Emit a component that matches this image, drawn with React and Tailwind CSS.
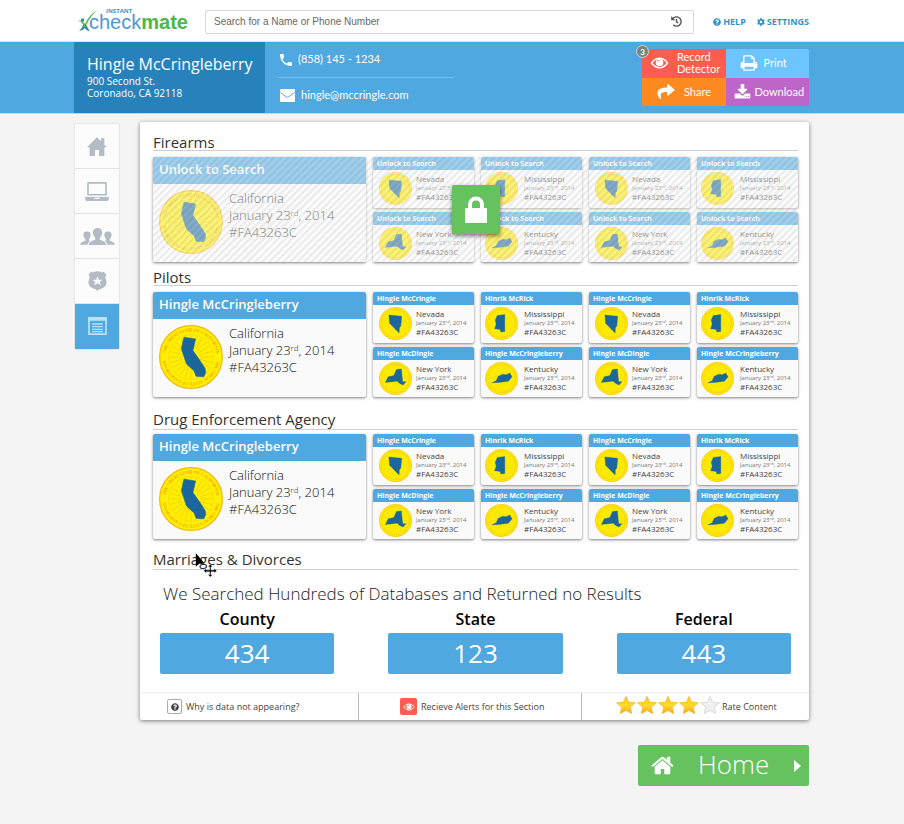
import { useId } from "react";
import { FaCog, FaHistory, FaQuestionCircle, FaShare } from "react-icons/fa";
import { MdPhone } from "react-icons/md";

const STATES = {
  California: "39,19 57,22 53,40 63,54 72,68 73,74 70,81 58,80 55,72 43,61 35,37",
  Nevada: "30,24 69,28 66,58 62,62 61,79 32,49",
  Mississippi: "37,26 60,23 60,74 48,76 46,68 29,66 34,52 31,40",
  "New York": "19,62 28,45 45,41 53,23 68,21 70,44 72,60 82,60 73,70 64,66 55,58",
  Kentucky: "21,63 34,57 40,43 54,37 64,39 75,33 82,45 71,58 42,62",
};

const MINI_STATES = [
  ["Nevada", "Hingle McCringle"],
  ["Mississippi", "Hinrik McRick"],
  ["Nevada", "Hingle McCringle"],
  ["Mississippi", "Hinrik McRick"],
  ["New York", "Hingle McDingle"],
  ["Kentucky", "Hingle McCringleberry"],
  ["New York", "Hingle McDingle"],
  ["Kentucky", "Hingle McCringleberry"],
];

const RAYS = Array.from({ length: 24 }, (_, i) => i * 15);

function Seal({ state, lettered, className }) {
  const id = useId();
  return (
    <svg viewBox="0 0 100 100" className={className} aria-hidden="true">
      <circle cx="50" cy="50" r="49" fill="#fff000" stroke="#f6b80c" strokeWidth="2" />
      <circle cx="50" cy="50" r="35" fill="none" stroke="#f3d20a" strokeWidth="1.2" />
      {RAYS.map((a) => (
        <path key={a} d="M50 36V17" stroke="#eecb0a" strokeWidth="1.2" transform={`rotate(${a} 50 50)`} />
      ))}
      {lettered ? (
        <>
          <path id={id + "top"} d="M10 50A40 40 0 0 1 90 50" fill="none" />
          <path id={id + "low"} d="M90 50A40 40 0 0 1 10 50" fill="none" />
          <g fill="#ee7f1c" fontSize="7" fontFamily="Liberation Serif, serif" textAnchor="middle">
            <text><textPath href={`#${id}top`} startOffset="50%">THE GREAT STATE OF CALIFORNIA</textPath></text>
            <text><textPath href={`#${id}low`} startOffset="50%">THE GREAT STATE OF CALIFORNIA</textPath></text>
          </g>
        </>
      ) : (
        <circle cx="50" cy="50" r="42" fill="none" stroke="#f3ad1a" strokeWidth="5" strokeDasharray="3 2.500" opacity="0.6" />
      )}
      <polygon points={STATES[state]} fill="#1b669b" stroke="#1b669b" strokeWidth="1" strokeLinejoin="round" />
    </svg>
  );
}

function BigCard({ title }) {
  return (
    <article className="w-[213px] shrink-0 overflow-hidden rounded-xs bg-[#fafafa] shadow-[0_1px_3px_rgba(0,0,0,0.5)]">
      <h3 className="h-[27px] bg-[#4fa8df] pl-1.5 text-[13px] leading-[25px] font-semibold text-white">{title}</h3>
      <div className="flex pt-1.5 pl-1.5">
        <Seal state="California" lettered className="size-16" />
        <div className="pl-1.5 text-[13px] leading-[17px] font-light text-[#111]">
          <p>California</p>
          <p>January 23<sup className="top-[-4px] text-[8px]">rd</sup>, 2014</p>
          <p>#FA43263C</p>
        </div>
      </div>
    </article>
  );
}

function MiniCard({ title, state, even }) {
  return (
    <article className="overflow-hidden rounded-xs bg-[#fafafa] shadow-[0_1px_3px_rgba(0,0,0,0.5)]">
      <h3 className="h-[13px] bg-[#4fa8df] pl-1 text-[7px] leading-[13px] font-bold text-white">{title}</h3>
      <div className={even ? "flex gap-1.5 pt-0.5 pl-1" : "flex gap-1 pt-0.5 pl-1.5"}>
        <Seal state={state} className="size-[33px]" />
        <div className="pt-0.5 text-[8px] leading-[10px] text-[#444]">
          <p>{state}</p>
          <p className="text-[6px] leading-[8px] text-[#777]">January 23<sup className="top-[-2px] text-[4px]">rd</sup>, 2014</p>
          <p>#FA43263C</p>
        </div>
      </div>
    </article>
  );
}

function Heading({ children, className }) {
  return (
    <h2 className={"border-b border-[#d0d0d0] text-[15px] leading-4 text-[#333] " + className}>{children}</h2>
  );
}

function LockIcon({ className }) {
  return (
    <svg viewBox="0 0 24 28" className={className} aria-hidden="true">
      <path d="M6 14V8.500A6 6 0 0 1 18 8.500V14" fill="none" stroke="currentColor" strokeWidth="4" />
      <rect x="1" y="12" width="22" height="15" rx="1" fill="currentColor" />
    </svg>
  );
}

function Records({ locked }) {
  return (
    <div className="relative flex h-[105px] gap-[7px]">
      <BigCard title={locked ? "Unlock to Search" : "Hingle McCringleberry"} />
      <div className="grid flex-1 grid-cols-4 grid-rows-2 gap-x-[7px] gap-y-1">
        {MINI_STATES.map(([state, name], i) => (
          <MiniCard key={i} state={state} title={locked ? "Unlock to Search" : name} even={i % 2 === 1} />
        ))}
      </div>
      {locked && (
        <>
          <div className="absolute inset-0 bg-white/45" />
          <div className="absolute inset-0 bg-[repeating-linear-gradient(135deg,rgba(0,0,0,0.06)_0px,rgba(0,0,0,0.06)_2px,transparent_3px,transparent_5px)]" />
          <button aria-label="Unlock" className="absolute top-7 left-[299px] flex h-[49px] w-12 items-center justify-center rounded-xs bg-[#66c25f] text-white shadow-[0_2px_4px_rgba(0,0,0,0.5)]">
            <LockIcon className="h-7 w-6" />
          </button>
        </>
      )}
    </div>
  );
}

function EyeIcon({ className }) {
  return (
    <svg viewBox="0 0 36 24" className={className} aria-hidden="true">
      <path d="M2 12Q9 2.500 18 2.500T34 12Q27 21.500 18 21.500T2 12Z" fill="none" stroke="currentColor" strokeWidth="2.800" />
      <circle cx="18" cy="11" r="7.500" fill="currentColor" />
      <path d="M14 10Q14 6.500 18 6.500" fill="none" stroke="#fd5d4e" strokeWidth="1.400" />
    </svg>
  );
}

function HomeIcon({ className }) {
  return (
    <svg viewBox="60 200 1672 1400" className={className} fill="currentColor" aria-hidden="true">
      <path d="M1472 992v480q0 26-19 45t-45 19h-384v-384h-256v384h-384q-26 0-45-19t-19-45v-480q0-1 .5-3t.5-3l575-474 575 474q1 2 1 6zm223-69l-62 74q-8 9-21 11h-3q-13 0-21-7l-692-577-692 577q-12 8-24 7-13-2-21-11l-62-74q-8-10-7-23.500t11-21.500l719-599q32-26 76-26t76 26l244 204v-195q0-14 9-23t23-9h192q14 0 23 9t9 23v408l219 182q10 8 11 21.500t-7 23.500z" />
    </svg>
  );
}

function PrintIcon({ className }) {
  return (
    <svg viewBox="0 0 1792 1792" className={className} fill="currentColor" aria-hidden="true">
      <path d="M448 1536h896v-256h-896v256zm0-640h896v-384h-160q-40 0-68-28t-28-68v-160h-640v640zm1152 64q0-26-19-45t-45-19-45 19-19 45 19 45 45 19 45-19 19-45zm128 0v416q0 13-9.500 22.500t-22.500 9.500h-224v160q0 40-28 68t-68 28h-960q-40 0-68-28t-28-68v-160h-224q-13 0-22.500-9.500t-9.500-22.500v-416q0-79 56.500-135.500t135.500-56.500h64v-544q0-40 28-68t68-28h672q40 0 88 20t76 48l152 152q28 28 48 76t20 88v256h64q79 0 135.500 56.500t56.500 135.500z" />
    </svg>
  );
}

function DownloadIcon({ className }) {
  return (
    <svg viewBox="0 0 1792 1600" className={className} fill="currentColor" aria-hidden="true">
      <path d="M1344 1344q0-26-19-45t-45-19-45 19-19 45 19 45 45 19 45-19 19-45zm256 0q0-26-19-45t-45-19-45 19-19 45 19 45 45 19 45-19 19-45zm128-224v320q0 40-28 68t-68 28h-1472q-40 0-68-28t-28-68v-320q0-40 28-68t68-28h465l135 136q58 56 136 56t136-56l136-136h464q40 0 68 28t28 68zm-325-569q17 41-14 70l-448 448q-18 19-45 19t-45-19l-448-448q-31-29-14-70 17-39 59-39h256v-448q0-26 19-45t45-19h256q26 0 45 19t19 45v448h256q42 0 59 39z" />
    </svg>
  );
}

function MailIcon({ className }) {
  return (
    <svg viewBox="0 0 45 39" className={className} aria-hidden="true">
      <rect width="45" height="39" rx="3" fill="#fff" />
      <path d="M1 10L18 23Q22.500 27 27 23L44 10" fill="none" stroke="#4fa8df" strokeWidth="2.800" />
    </svg>
  );
}

function Logo() {
  return (
    <a href="#home" aria-label="Instant Checkmate" className="relative flex w-[131px] items-center pb-0.5">
      <svg viewBox="0 0 60 66" className="ml-[3px] h-[22px] w-5 shrink-0" aria-hidden="true">
        <path d="M3 32Q16 28 24 43Q34 17 60 1Q38 22 28 45L38 64Q28 60 22 53Q16 60 8 61Q17 53 18 44Q14 34 3 32Z" fill="#4db748" />
        <path d="M25 45L38 64Q27 60 21 51Z" fill="#2f86c6" />
        <path d="M17 50Q15 58 6 62Q18 62 23 54Z" fill="#2f86c6" />
        <circle cx="17" cy="30" r="5" fill="#2f86c6" />
      </svg>
      <span className="-ml-2 pt-0.5 font-['Liberation_Sans',sans-serif] text-[20px] leading-[22px] text-[#4c9ad6]">
        check<b className="text-[#4db748]">mate</b>
      </span>
      <span className="absolute -top-0.5 left-8 text-[6px] leading-[8px] font-bold text-[#3f90cf]">INSTANT</span>
    </a>
  );
}

const SIDE_ICONS = [
  {
    label: "Home",
    icon: (
      <svg viewBox="0 0 60 57" className="h-[19px] w-5" fill="currentColor">
        <path d="M0 31L30 1L42 13V4H52V23L60 31H52V57H36V39H24V57H8V31Z" />
      </svg>
    ),
  },
  {
    label: "Computer",
    icon: (
      <svg viewBox="0 0 72 58" className="h-[19px] w-6" fill="currentColor">
        <path fillRule="evenodd" d="M10 0H62Q66 0 66 4V41H6V4Q6 0 10 0ZM11 5V37H61V5ZM0 46H72V53Q72 58 67 58H5Q0 58 0 53ZM28 48V52H44V48Z" />
      </svg>
    ),
  },
  {
    label: "People",
    icon: (
      <svg viewBox="0 0 106 52" className="h-[17px] w-[35px]" fill="currentColor">
        <path d="M53 0C63 0 68 7 67 16C66 23 63 27 60 30V35C66 39 79 40 80 52H26C27 40 40 39 46 35V30C43 27 40 23 39 16C38 7 43 0 53 0Z" />
        <path d="M21 11C30 11 33 17 32 24C31 29 29 32 27 34V38L30 40Q25 43 22 51H0C1 42 10 42 16 38V34C13 32 11 29 10 24C9 17 12 11 21 11Z" />
        <path d="M85 11C76 11 73 17 74 24C75 29 77 32 79 34V38L76 40Q81 43 84 51H106C105 42 96 42 90 38V34C93 32 95 29 96 24C97 17 94 11 85 11Z" />
      </svg>
    ),
  },
  {
    label: "Police",
    icon: (
      <svg viewBox="0 0 56 60" className="h-5 w-[19px]" fill="currentColor">
        <path fillRule="evenodd" d="M9 2Q15 6 19 2Q24 3 28 0Q32 3 37 2Q41 6 47 2L55 11Q49 18 54 27Q59 45 42 52Q33 54 28 60Q23 54 14 52Q-3 45 2 27Q7 18 1 11ZM28 16L24 26H13L21 33L18 43L28 37L38 43L35 33L43 26H32Z" />
      </svg>
    ),
  },
  {
    label: "Records",
    icon: (
      <svg viewBox="0 0 56 54" className="h-[18px] w-[19px]" fill="none" stroke="#b9e3fb">
        <path d="M2.500 2.500H53.500V51.500H2.500Z" strokeWidth="5" />
        <path d="M0 6H56" strokeWidth="11" />
        <path d="M12 21H44M12 29H44M12 37H44M12 44H44" strokeWidth="4" />
      </svg>
    ),
  },
];

function Star({ filled }) {
  return (
    <svg viewBox="0 0 54 50" className="h-[18px] w-5" aria-hidden="true">
      <defs>
        <linearGradient id="gold" x1="0" y1="0" x2="0" y2="1">
          <stop offset="0" stopColor="#fbc31e" />
          <stop offset="0.5" stopColor="#ffdc2b" />
          <stop offset="1" stopColor="#fba51c" />
        </linearGradient>
      </defs>
      <path d="M27 1L34 17L53 19L39 31L43 49L27 40L11 49L15 31L1 19L20 17Z" fill={filled ? "url(#gold)" : "#f0f0f0"} stroke={filled ? "#f9b52a" : "#cfcfcf"} strokeWidth="2" strokeLinejoin="round" />
    </svg>
  );
}

const RESULTS = [["County", "434"], ["State", "123"], ["Federal", "443"]];

export default function App() {
  return (
    <div className="min-h-screen bg-[#f4f4f4] font-['Open_Sans','Noto_Sans',sans-serif]">
      <header className="border-b border-[#d5e3ec] bg-white pr-[21px]">
        <div className="mx-auto flex h-[41px] max-w-[735px] items-center pt-0.5">
          <Logo />
          <div className="relative w-[489px]">
            <input
              type="search"
              aria-label="Search"
              placeholder="Search for a Name or Phone Number"
              className="block h-6 w-full rounded-xs border border-[#d8d8d8] pr-8 pl-2 font-['Liberation_Sans',sans-serif] text-[10px] placeholder:text-[#666]"
            />
            <FaHistory className="absolute top-1.5 right-3 size-[11px] text-[#555]" />
          </div>
          <nav className="ml-auto flex gap-[11px] text-[9px] font-bold text-[#2f93d3]">
            <a href="#help" className="flex items-center gap-0.5"><FaQuestionCircle className="size-2" />HELP</a>
            <a href="#settings" className="flex items-center gap-0.5"><FaCog className="size-2" />SETTINGS</a>
          </nav>
        </div>
      </header>

      <section className="border-b border-[#b5daf1] bg-[#4fa8df] pr-[21px] text-white">
        <div className="mx-auto flex h-[71px] max-w-[735px]">
          <div className="w-[191px] bg-[#2782bb] pt-3 pl-[13px]">
            <h1 className="text-[16px] leading-[21px]">Hingle McCringleberry</h1>
            <address className="text-[10px] leading-3 not-italic">900 Second St.<br />Coronado, CA 92118</address>
          </div>
          <div className="ml-[13px] w-[176px] font-[Lato,sans-serif] text-[11px]">
            <p className="flex h-9 items-center gap-1 border-b border-[#74c3f3]"><MdPhone className="size-4" />(858) 145 - 1234</p>
            <p className="flex h-[34px] items-center gap-1.5 pl-0.5"><MailIcon className="h-[13px] w-[15px]" />hingle@mccringle.com</p>
          </div>
          <div className="relative mt-[7px] ml-auto grid h-[57px] w-[167px] grid-cols-2 grid-rows-2 font-[Lato,sans-serif] text-[11px] leading-[12px]">
            <button className="flex items-center gap-2 rounded-tl-xs bg-[#fd5d4e] pl-2 text-left"><EyeIcon className="h-3 w-[19px] shrink-0" /><span>Record<br />Detector</span></button>
            <button className="flex items-center gap-1.5 rounded-tr-xs bg-[#6cc5ff] pl-3.5"><PrintIcon className="size-[18px]" />Print</button>
            <button className="flex items-center gap-2 rounded-bl-xs bg-[#fd8a20] pl-3.5"><FaShare className="h-[17px] w-5" />Share</button>
            <button className="flex items-center gap-1 rounded-br-xs bg-[#bd65c8] pl-2"><DownloadIcon className="h-[15px] w-[17px]" />Download</button>
            <span className="absolute -top-1 -left-1.5 flex size-[13px] items-center justify-center rounded-full border border-[#d5d5d5] bg-[#808080] text-[8px] font-bold">3</span>
          </div>
        </div>
      </section>

      <div className="pr-[21px]">
        <div className="mx-auto max-w-[735px]">
          <div className="flex items-start gap-5 pt-2">
            <nav className="mt-px w-[46px] shrink-0 overflow-hidden rounded-xs border border-[#e6e6e6] bg-[#fcfcfc] text-[#b3bbc5]">
              {SIDE_ICONS.map(({ label, icon }) => (
                <a
                  key={label}
                  href={"#" + label}
                  aria-label={label}
                  className="flex h-[45px] items-center justify-center border-b border-[#e2e2e2] last:border-[#4fa8df] last:bg-[#4fa8df]"
                >
                  {icon}
                </a>
              ))}
            </nav>

            <main className="min-w-0 flex-1 rounded-xs bg-white shadow-[0_1px_4px_rgba(0,0,0,0.5)]">
              <div className="pt-3 pr-[11px] pl-[13px]">
                <Heading className="mb-1.5">Firearms</Heading>
                <Records locked />
                <Heading className="mt-[7px] mb-1.5">Pilots</Heading>
                <Records />
                <Heading className="mt-3.5 mb-1 pb-0.5">Drug Enforcement Agency</Heading>
                <Records />
                <Heading className="mt-3 pb-0.5">Marriages &amp; Divorces</Heading>
                <p className="pt-3 pl-2.5 text-[17px] leading-6 font-light text-[#222]">We Searched Hundreds of Databases and Returned no Results</p>
                <div className="grid grid-cols-3 gap-[54px] px-[7px] pt-0.5 pb-[18px] text-center">
                  {RESULTS.map(([label, count]) => (
                    <div key={label}>
                      <h3 className="text-[16px] leading-[22px] font-semibold text-black">{label}</h3>
                      <p className="mt-[3px] h-[41px] rounded-xs bg-[#4fa8df] text-[26px] leading-10 text-white">{count}</p>
                    </div>
                  ))}
                </div>
              </div>
              <footer className="flex h-7 border-t border-[#eee] text-[9px] text-[#444]">
                <button className="flex w-[219px] items-center gap-1 border-r border-[#bbb] pl-[27px]">
                  <span className="flex size-[15px] items-center justify-center rounded-xs border border-[#aaa]"><FaQuestionCircle className="size-2" /></span>
                  Why is data not appearing?
                </button>
                <button className="flex w-[223px] items-center gap-1 border-r border-[#bbb] pl-[41px]">
                  <span className="flex size-[17px] items-center justify-center rounded-xs bg-[#fd5d4e] text-white"><EyeIcon className="h-2 w-3" /></span>
                  Recieve Alerts for this Section
                </button>
                <button className="flex flex-1 items-center pb-1 pl-[34px]">
                  <span className="flex gap-px">
                    {[1, 2, 3, 4, 5].map((n) => <Star key={n} filled={n < 5} />)}
                  </span>
                  <span className="pt-1 pl-0.5">Rate Content</span>
                </button>
              </footer>
            </main>
          </div>

          <button className="mt-[25px] ml-auto flex h-[41px] w-[171px] items-center rounded-xs bg-[#66c25f] pl-[13px] text-[26px] font-light text-white">
            <HomeIcon className="h-[19px] w-[23px]" />
            <span className="pb-0.5 pl-6">Home</span>
            <svg viewBox="0 0 7 12" className="mr-2 ml-auto h-3 w-[7px]" fill="currentColor" aria-hidden="true"><path d="M0 0L7 6L0 12Z" /></svg>
          </button>
        </div>
      </div>

      <svg viewBox="0 0 66 76" className="absolute top-[553px] left-[195px] h-[25px] w-[22px]" aria-hidden="true">
        <path d="M2 0V42L12 33H29Z" fill="#000" />
        <path d="M46 34L53 42H48V52H58V47L66 54L58 61V57H48V66H53L46 73L39 66H44V57H34V61L26 54L34 47V52H44V42H39Z" fill="#000" stroke="#fff" strokeWidth="1" />
      </svg>
    </div>
  );
}
